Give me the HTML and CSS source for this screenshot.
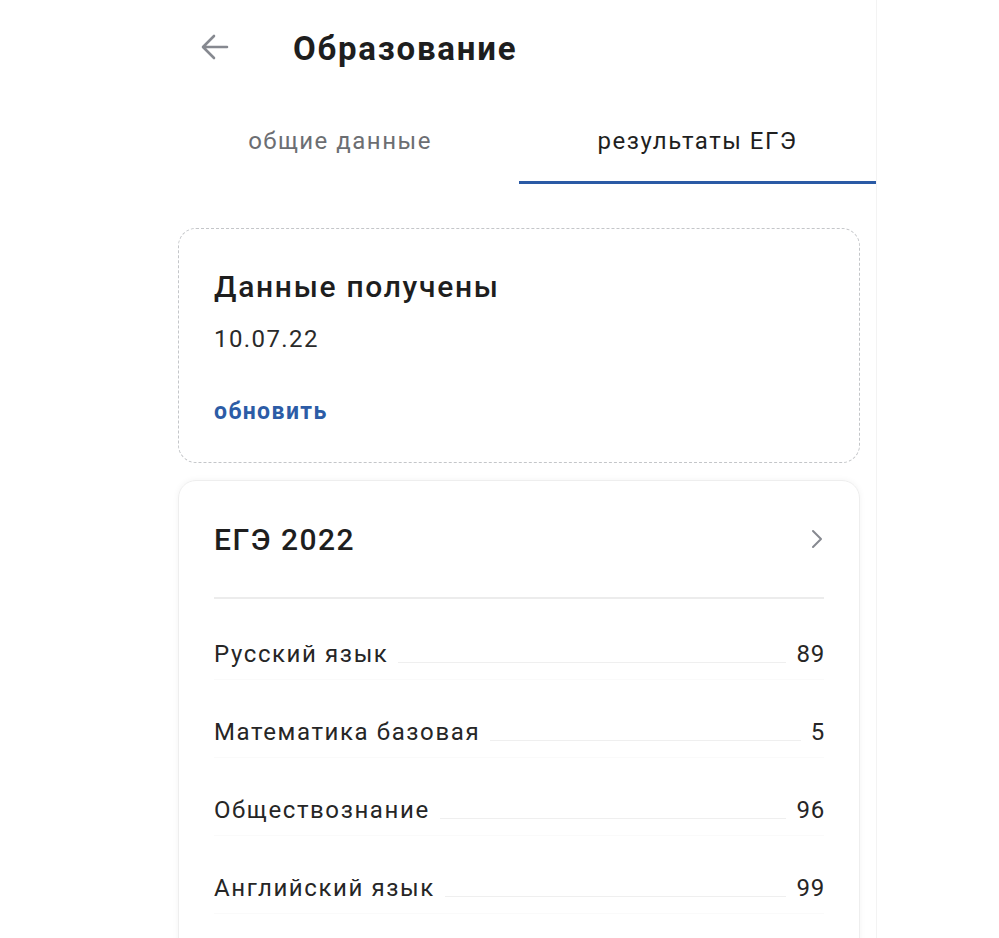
FILE: index.html
```html
<!DOCTYPE html>
<html lang="ru">
<head>
    <meta charset="UTF-8">
    <meta name="viewport" content="width=device-width, initial-scale=1.0">
    <title>Образование</title>
    <link rel="stylesheet" href="styles.css">
</head>
<body>
    <div class="screen">
        <div class="topbar">
            <svg class="back" width="32" height="32" viewBox="0 0 32 32">
                <path d="M28 16H5M15 5L4 16l11 11" fill="none" stroke="#868990" stroke-width="2.6" stroke-linecap="round" stroke-linejoin="round"/>
            </svg>
            <h1 class="title">Образование</h1>
        </div>

        <div class="tabs">
            <div class="tab">общие данные</div>
            <div class="tab active">результаты ЕГЭ</div>
        </div>

        <div class="status-card">
            <h2 class="status-title">Данные получены</h2>
            <div class="status-date">10.07.22</div>
            <a class="refresh" href="#">обновить</a>
        </div>

        <div class="exam-card">
            <div class="exam-head">
                <h2 class="exam-title">ЕГЭ 2022</h2>
                <svg width="14" height="22" viewBox="0 0 14 22">
                    <path d="M3 3l8 8-8 8" fill="none" stroke="#868990" stroke-width="2" stroke-linecap="round" stroke-linejoin="round"/>
                </svg>
            </div>
            <ul class="scores">
                <li class="score"><span class="subj">Русский язык</span><span class="leader"></span><span class="val">89</span></li>
                <li class="score"><span class="subj">Математика базовая</span><span class="leader"></span><span class="val">5</span></li>
                <li class="score"><span class="subj">Обществознание</span><span class="leader"></span><span class="val">96</span></li>
                <li class="score"><span class="subj">Английский язык</span><span class="leader"></span><span class="val">99</span></li>
            </ul>
        </div>
    </div>
</body>
</html>
```

FILE: styles.css
```css
body {
    margin: 0;
    background: #ffffff;
    font-family: Roboto, "Noto Sans", Arial, sans-serif;
    color: #222222;
    height: 938px;
    overflow: hidden;
}

.screen {
    width: 698px;
    margin-left: 178px;
    border-right: 1px solid #f3f3f3;
    min-height: 938px;
}

.topbar {
    display: flex;
    align-items: center;
    height: 96px;
    padding-left: 21px;
}
.back {
    margin-right: 62px;
    margin-top: -2px;
}
.title {
    margin: 0;
    font-size: 33px;
    font-weight: 700;
    color: #1e1e1e;
    letter-spacing: 1.8px;
}

.tabs {
    display: flex;
    height: 88px;
}
.tab {
    flex: 1;
    text-align: center;
    font-size: 24px;
    color: #6c6e72;
    padding-top: 31px;
    box-sizing: border-box;
    letter-spacing: 1.5px;
}
.tab:first-child {
    flex: 0 0 341px;
    padding-right: 17px;
}
.tab.active {
    color: #1f1f1f;
    border-bottom: 3px solid #2a5aa5;
}

.status-card {
    margin-top: 44px;
    width: 682px;
    box-sizing: border-box;
    border: 1.5px dashed #c4c6c9;
    border-radius: 18px;
    padding: 40px 35px 0;
    height: 235px;
}
.status-title {
    margin: 0;
    font-size: 30px;
    line-height: 35px;
    font-weight: 500;
    color: #1e1e1e;
    letter-spacing: 1.7px;
}
.status-date {
    margin-top: 21px;
    font-size: 24px;
    line-height: 28px;
    color: #2a2a2a;
    letter-spacing: 1.4px;
}
.refresh {
    display: block;
    width: fit-content;
    margin-top: 45px;
    font-size: 23px;
    line-height: 27px;
    font-weight: 700;
    color: #2c5ca6;
    text-decoration: none;
    letter-spacing: 1.4px;
}

.exam-card {
    margin-top: 17px;
    width: 682px;
    box-sizing: border-box;
    border: 1px solid #eeeeee;
    border-radius: 18px;
    box-shadow: 0 0 6px rgba(0, 0, 0, 0.05);
    padding: 0 35px;
    height: 480px;
}
.exam-head {
    display: flex;
    align-items: center;
    justify-content: space-between;
    height: 116px;
    border-bottom: 2px solid #ececec;
}
.exam-title {
    margin: 0;
    font-size: 30px;
    font-weight: 500;
    color: #1e1e1e;
    letter-spacing: 1.5px;
}

.scores {
    list-style: none;
    margin: 0;
    padding: 0;
}
.score {
    display: flex;
    align-items: flex-end;
    height: 78px;
    box-sizing: border-box;
    font-size: 24px;
    color: #262626;
    letter-spacing: 1.6px;
    border-bottom: 1px solid #fafafa;
}
.score:first-child {
    height: 81px;
}
.subj, .val {
    line-height: 1;
    padding-bottom: 13px;
}
.val {
    letter-spacing: 0.8px;
    margin-right: -1px;
}
.leader {
    flex: 1;
    margin: 0 10px 16px;
    border-bottom: 1px solid #efefef;
}
```
